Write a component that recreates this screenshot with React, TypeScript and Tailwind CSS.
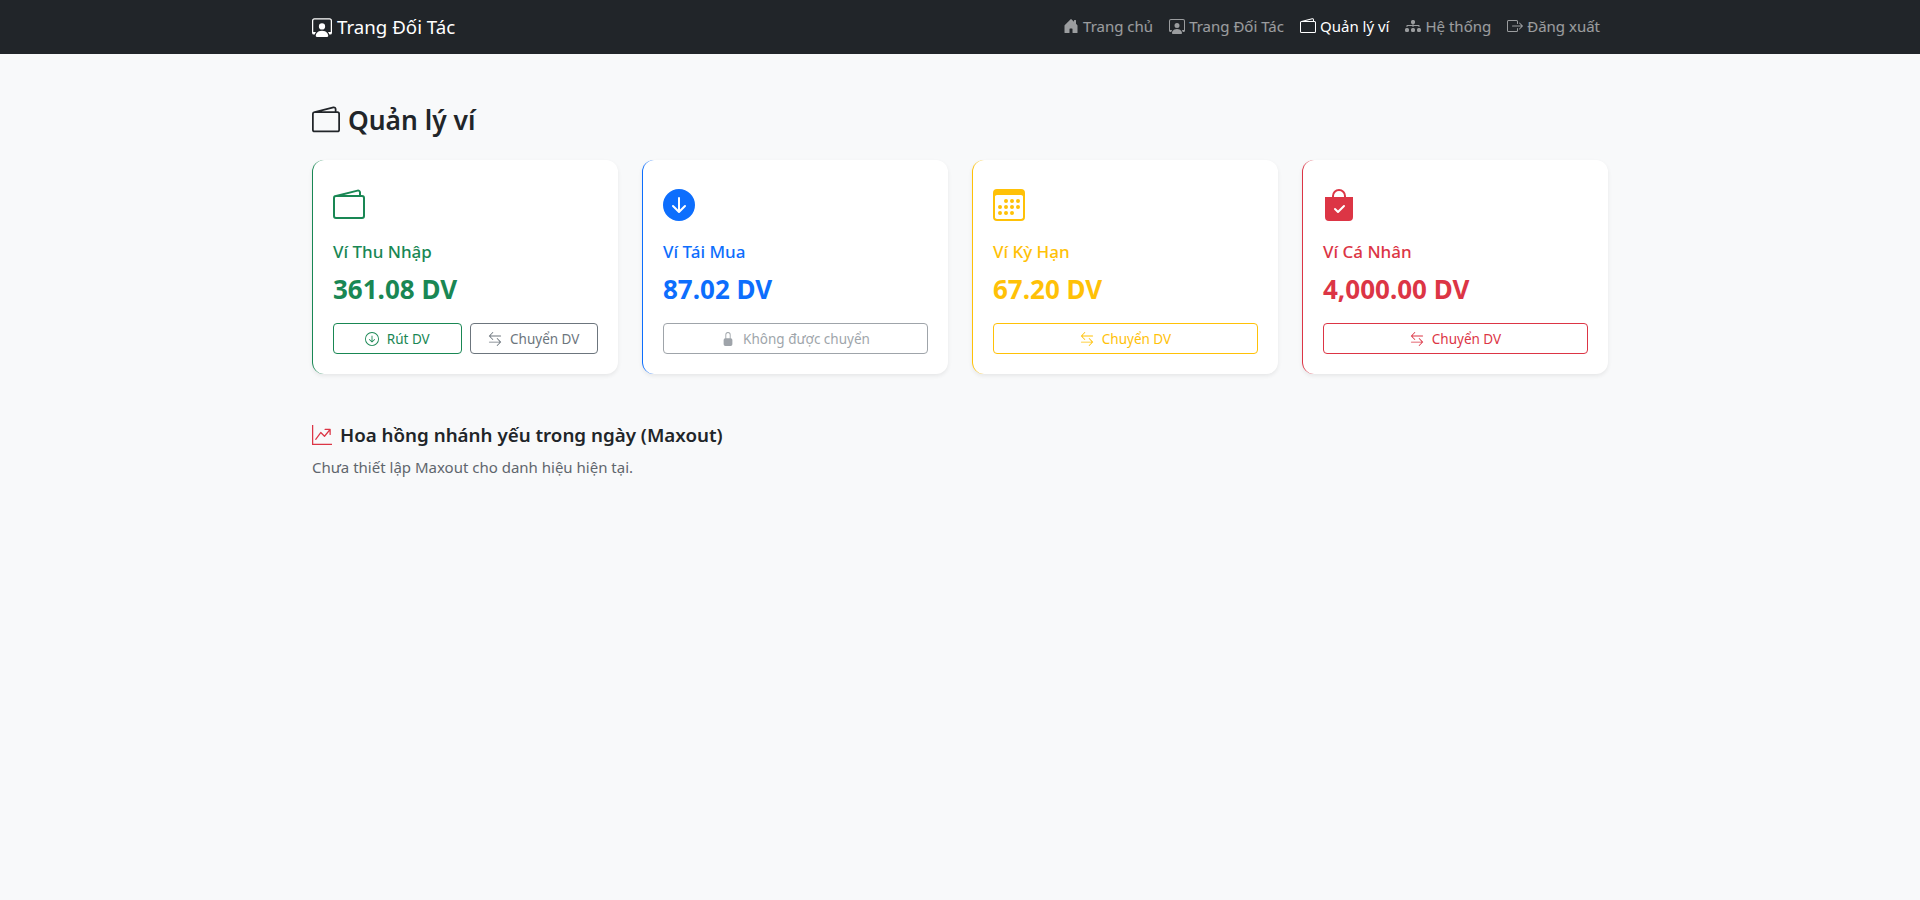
import React from 'react';
import {
  BsArrowDownCircle,
  BsArrowDownCircleFill,
  BsArrowLeftRight,
  BsBagCheckFill,
  BsBoxArrowRight,
  BsCalendar3,
  BsDiagram3Fill,
  BsGraphUpArrow,
  BsHouseDoorFill,
  BsLockFill,
  BsPersonWorkspace,
  BsWallet2,
} from 'react-icons/bs';

const NAV_ITEMS = [
  { label: 'Trang chủ', icon: BsHouseDoorFill },
  { label: 'Trang Đối Tác', icon: BsPersonWorkspace },
  { label: 'Quản lý ví', icon: BsWallet2, active: true },
  { label: 'Hệ thống', icon: BsDiagram3Fill },
  { label: 'Đăng xuất', icon: BsBoxArrowRight },
];

const Navbar: React.FC = () => (
  <nav className="h-[54px] bg-[#212529]">
    <div className="mx-auto flex h-full w-[1320px] items-center justify-between px-3">
      <a className="flex items-center gap-[5px] text-[18.7px] text-white">
        <BsPersonWorkspace size={20} />
        Trang Đối Tác
      </a>
      <ul className="flex items-center">
        {NAV_ITEMS.map((item) => (
          <li
            key={item.label}
            className={`flex items-center gap-1 px-2 pb-[2px] text-[15px] ${item.active ? 'text-white' : 'text-white/55'}`}
          >
            <item.icon size={16} />
            {item.label}
          </li>
        ))}
      </ul>
    </div>
  </nav>
);

const TransferLabel = () => (
  <>
    <BsArrowLeftRight size={14} />
    Chuyển DV
  </>
);

const btnBase =
  'flex h-[31px] flex-1 items-center justify-center gap-2 rounded-[4px] border bg-white pt-[1px] text-[13.5px]';

const cardBase = 'h-[214px] rounded-xl border-l bg-white p-5 shadow-[0_2px_4px_rgba(0,0,0,0.075)]';

const App: React.FC = () => {
  return (
    <div className="min-h-screen bg-[#f8f9fa] font-['Noto_Sans',sans-serif] text-[#212529]">
      <Navbar />

      <main className="mx-auto w-[1320px] px-3 pt-[44px]">
        <h2 className="flex h-[44px] items-center gap-2 text-[26.4px] leading-none font-semibold">
          <BsWallet2 size={28} />
          Quản lý ví
        </h2>

        <div className="mt-[18px] grid grid-cols-4 gap-6">
          {/* Vi Thu Nhap */}
          <div className={`${cardBase} border-[#198754]`}>
            <div className="flex h-[50px] items-center text-[#198754]">
              <BsWallet2 size={32} />
            </div>
            <h5 className="mt-[10px] text-[17px] leading-6 font-medium text-[#198754]">Ví Thu Nhập</h5>
            <div className="mt-2 text-[26px] leading-[34px] font-bold text-[#198754]">361.08 DV</div>
            <div className="mt-[17px] flex gap-2">
              <button className={`${btnBase} border-[#198754] text-[#198754]`}>
                <BsArrowDownCircle size={14} />
                Rút DV
              </button>
              <button className={`${btnBase} border-[#6c757d] text-[#6c757d]`}>
                <TransferLabel />
              </button>
            </div>
          </div>

          {/* Vi Tai Mua */}
          <div className={`${cardBase} border-[#0d6efd]`}>
            <div className="flex h-[50px] items-center text-[#0d6efd]">
              <BsArrowDownCircleFill size={32} />
            </div>
            <h5 className="mt-[10px] text-[17px] leading-6 font-medium text-[#0d6efd]">Ví Tái Mua</h5>
            <div className="mt-2 text-[26px] leading-[34px] font-bold text-[#0d6efd]">87.02 DV</div>
            <div className="mt-[17px] flex gap-2">
              <button className={`${btnBase} border-[#6c757d] text-[#6c757d] opacity-65`}>
                <BsLockFill size={14} />
                Không được chuyển
              </button>
            </div>
          </div>

          {/* Vi Ky Han */}
          <div className={`${cardBase} border-[#ffc107]`}>
            <div className="flex h-[50px] items-center text-[#ffc107]">
              <BsCalendar3 size={32} />
            </div>
            <h5 className="mt-[10px] text-[17px] leading-6 font-medium text-[#ffc107]">Ví Kỳ Hạn</h5>
            <div className="mt-2 text-[26px] leading-[34px] font-bold text-[#ffc107]">67.20 DV</div>
            <div className="mt-[17px] flex gap-2">
              <button className={`${btnBase} border-[#ffc107] text-[#ffc107]`}>
                <TransferLabel />
              </button>
            </div>
          </div>

          {/* Vi Ca Nhan */}
          <div className={`${cardBase} border-[#dc3545]`}>
            <div className="flex h-[50px] items-center text-[#dc3545]">
              <BsBagCheckFill size={32} />
            </div>
            <h5 className="mt-[10px] text-[17px] leading-6 font-medium text-[#dc3545]">Ví Cá Nhân</h5>
            <div className="mt-2 text-[26px] leading-[34px] font-bold text-[#dc3545]">4,000.00 DV</div>
            <div className="mt-[17px] flex gap-2">
              <button className={`${btnBase} border-[#dc3545] text-[#dc3545]`}>
                <TransferLabel />
              </button>
            </div>
          </div>
        </div>

        <h5 className="mt-[46px] flex h-[30px] items-center gap-2 text-[18.75px] font-semibold">
          <BsGraphUpArrow size={20} className="text-[#dc3545]" />
          Hoa hồng nhánh yếu trong ngày (Maxout)
        </h5>
        <p className="mt-[5px] text-[15px] leading-6 text-[#5f666d]">
          Chưa thiết lập Maxout cho danh hiệu hiện tại.
        </p>
      </main>
    </div>
  );
};

export default App;
